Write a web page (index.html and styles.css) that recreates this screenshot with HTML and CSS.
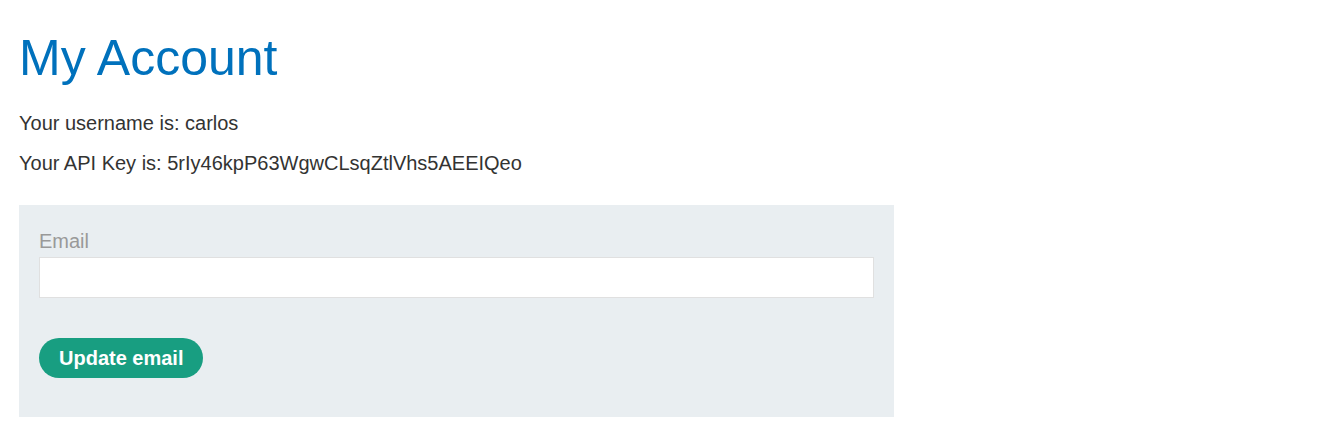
FILE: index.html
```html
<!DOCTYPE html>
<html>
<head>
<meta charset="utf-8">
<link rel="stylesheet" href="styles.css">
</head>
<body>
<div class="container">
  <h1 class="title">My Account</h1>
  <p class="info">Your username is: carlos</p>
  <p class="info">Your API Key is: 5rIy46kpP63WgwCLsqZtlVhs5AEEIQeo</p>
  <form class="email-form">
    <label class="label" for="email">Email</label>
    <input class="input" id="email" type="email">
    <button class="button" type="button">Update email</button>
  </form>
</div>
</body>
</html>
```
FILE: styles.css
```css
html, body {
  margin: 0;
  padding: 0;
  background: #fff;
}
body {
  font-family: "Liberation Sans", Arial, sans-serif;
  color: #333332;
  font-size: 20px;
}
.container {
  padding: 0 19px;
}
.title {
  margin: 0;
  padding-top: 28px;
  font-size: 50px;
  font-weight: normal;
  line-height: 60px;
  color: #0071bc;
}
.info {
  margin: 0;
  line-height: 40px;
}
.info:first-of-type {
  margin-top: 15px;
}
.email-form {
  margin-top: 22px;
  width: 875px;
  box-sizing: border-box;
  background: #e9eef1;
  padding: 24px 20px 39px;
  display: flex;
  flex-direction: column;
  align-items: flex-start;
}
.label {
  color: #999;
  font-size: 20px;
  line-height: 24px;
  margin-bottom: 4px;
}
.input {
  width: 100%;
  box-sizing: border-box;
  height: 41px;
  border: 1px solid #e0e0e0;
  background: #fff;
  margin: 0 0 40px;
  padding: 0 8px;
}
.button {
  height: 40px;
  border: none;
  border-radius: 20px;
  background: #189e81;
  color: #fff;
  font-family: "Liberation Sans", Arial, sans-serif;
  font-weight: bold;
  font-size: 20px;
  padding: 0 20px;
  cursor: pointer;
}
```
